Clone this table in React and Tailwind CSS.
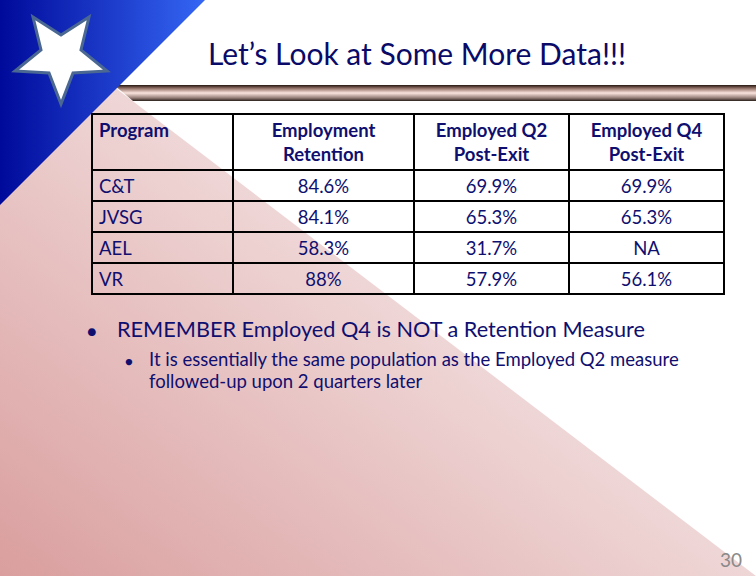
import React from "react";

const rows = [
  ["C&T", "84.6%", "69.9%", "69.9%"],
  ["JVSG", "84.1%", "65.3%", "65.3%"],
  ["AEL", "58.3%", "31.7%", "NA"],
  ["VR", "88%", "57.9%", "56.1%"],
];

// slide template: pink lower triangle, blue corner with star, tube rule under the title
const SlideBackground = () => (
  <svg className="absolute inset-0" width="756" height="576" viewBox="0 0 756 576">
    <defs>
      <linearGradient id="pink" gradientUnits="userSpaceOnUse" x1="0" y1="576" x2="278" y2="212">
        <stop offset="0" stopColor="#da9e9e" />
        <stop offset="1" stopColor="#efd6d6" />
      </linearGradient>
      <linearGradient id="blue" gradientUnits="userSpaceOnUse" x1="0" y1="0" x2="205" y2="0">
        <stop offset="0" stopColor="#000a9a" />
        <stop offset="1" stopColor="#3566f4" />
      </linearGradient>
      <linearGradient id="tube" x1="0" y1="0" x2="0" y2="1">
        <stop offset="0" stopColor="#24160f" />
        <stop offset="0.2" stopColor="#8e6e64" />
        <stop offset="0.5" stopColor="#fbe4de" />
        <stop offset="0.8" stopColor="#98807a" />
        <stop offset="1" stopColor="#2a201c" />
      </linearGradient>
    </defs>
    <polygon points="0,0 756,576 0,576" fill="url(#pink)" />
    <polygon points="114,85 756,85 756,101 133,101" fill="url(#tube)" />
    <polygon points="0,0 205,0 0,205" fill="url(#blue)" />
    <polygon
      points="33,17 61,35 89,17 81,50 107,71 73,73 61,104 49,73 15,71 41,50"
      fill="#ffffff"
      stroke="#4a6892"
      strokeWidth="3"
      strokeLinejoin="miter"
    />
  </svg>
);

export default function App() {
  return (
    <div className="relative w-[756px] h-[576px] overflow-hidden bg-white font-['Lato',sans-serif] text-[#0f0f70]">
      <SlideBackground />
      <div className="relative flex flex-col h-full">
        {/* Title */}
        <h1 className="h-[85px] pl-[78px] pt-[22px] flex items-center justify-center text-[30px] text-[#0a0a68]">
          Let’s Look at Some More Data!!!
        </h1>

        {/* Data table */}
        <table className="mt-[28px] ml-[91px] w-[632px] table-fixed border-collapse border-2 border-black">
          <colgroup>
            <col className="w-[141px]" />
            <col className="w-[181px]" />
            <col className="w-[155px]" />
            <col className="w-[155px]" />
          </colgroup>
          <thead>
            <tr className="h-[56px] text-[18.5px] font-bold leading-[24px]">
              <th className="border-2 border-black align-top text-left px-[6px] pt-[3px]">Program</th>
              <th className="border-2 border-black align-top text-center pt-[3px]">Employment<br />Retention</th>
              <th className="border-2 border-black align-top text-center pt-[3px]">Employed Q2<br />Post-Exit</th>
              <th className="border-2 border-black align-top text-center pt-[3px]">Employed Q4<br />Post-Exit</th>
            </tr>
          </thead>
          <tbody>
            {rows.map((row) => (
              <tr key={row[0]} className="h-[31px] text-[18.5px] leading-[24px]">
                <td className="border-2 border-black px-[6px] text-left">{row[0]}</td>
                <td className="border-2 border-black text-center">{row[1]}</td>
                <td className="border-2 border-black text-center">{row[2]}</td>
                <td className="border-2 border-black text-center">{row[3]}</td>
              </tr>
            ))}
          </tbody>
        </table>

        {/* Notes */}
        <div className="mt-[20px] ml-[87px] flex items-baseline">
          <span className="w-[30px] shrink-0 text-[16px]">●</span>
          <span className="text-[21.7px] leading-[28px]">REMEMBER Employed Q4 is NOT a Retention Measure</span>
        </div>
        <div className="mt-[5px] ml-[125px] flex items-baseline">
          <span className="w-[24px] shrink-0 text-[13px]">●</span>
          <span className="w-[580px] text-[18.5px] leading-[22px]">
            It is essentially the same population as the Employed Q2 measure
            <br />
            followed-up upon 2 quarters later
          </span>
        </div>

        {/* Page number */}
        <div className="mt-auto self-end pr-[14px] pb-[2px] text-[19px] text-[#8a8a8a]">30</div>
      </div>
    </div>
  );
}
